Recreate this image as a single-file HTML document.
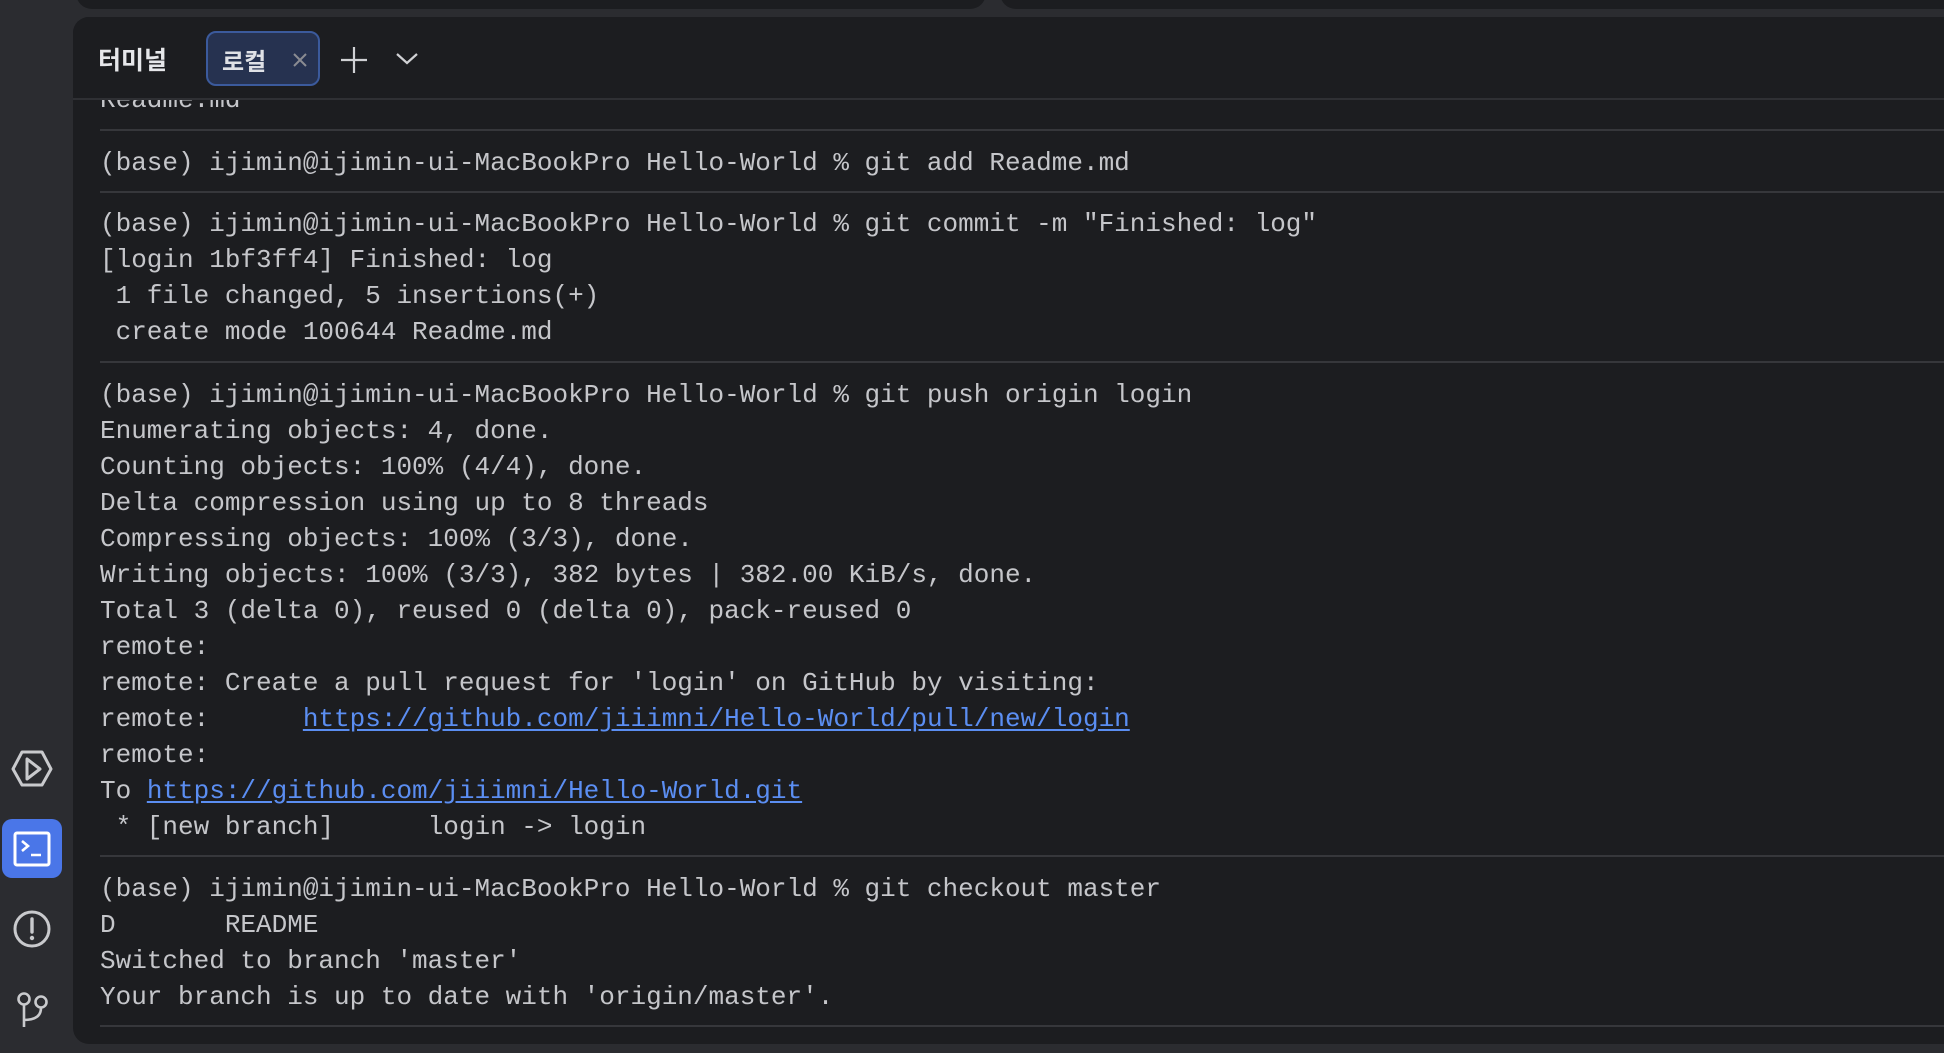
<!DOCTYPE html>
<html><head><meta charset="utf-8"><style>
*{margin:0;padding:0;box-sizing:border-box}
body{width:1944px;height:1053px;background:#2b2c30;position:relative;overflow:hidden;font-family:"Liberation Mono",monospace}
.top1{position:absolute;left:76px;top:-20px;width:910px;height:29px;background:#1c1d20;border-radius:0 0 16px 16px}
.top2{position:absolute;left:1000px;top:-20px;width:960px;height:29px;background:#1c1d20;border-radius:0 0 0 16px}
.panel{position:absolute;left:73px;top:17px;width:1900px;height:1027px;background:#1c1d20;border-radius:16px 0 0 16px;overflow:hidden}
.hdr{position:absolute;left:0;top:0;width:100%;height:83px;background:#1c1d20;border-bottom:2px solid #2f3034;z-index:2}
.ttl{position:absolute;left:25px;top:24px;font:bold 25px "Liberation Sans","Noto Sans CJK KR",sans-serif;color:#e6e7ea}
.tab{position:absolute;left:133px;top:14px;width:114px;height:55px;background:#263250;border:2px solid #3b5a9c;border-radius:10px}
.tab span{position:absolute;left:14px;top:9px;font:bold 24px "Liberation Sans","Noto Sans CJK KR",sans-serif;color:#dfe1e6}
.ln{position:absolute;left:27px;font-size:26px;line-height:36px;height:36px;color:#c5c6ca;white-space:pre}
.hr{position:absolute;left:27px;width:1900px;height:2px;background:#36373b}
a{color:#5b8ef2;text-decoration:underline;text-underline-offset:3px}
</style></head><body>
<div class="top1"></div><div class="top2"></div>
<svg style="position:absolute;left:0;top:740px" width="70" height="313">
<path d="M22 29 L42 29 L51 46 L42 62 L22 62 L13 46 Z" fill="none" stroke="#c9cacd" stroke-width="3" stroke-linejoin="round" transform="translate(0,-17)"/>
<path d="M27 19 L27 39 L40 29 Z" fill="none" stroke="#c9cacd" stroke-width="3" stroke-linejoin="round"/>
<rect x="2" y="79" width="60" height="59" rx="10" fill="#4a76e8"/>
<rect x="15" y="93" width="34" height="32" rx="2" fill="none" stroke="#fff" stroke-width="3"/>
<path d="M22 101 L28 106 L22 111 M31 115 L41 115" fill="none" stroke="#fff" stroke-width="2.6"/>
<circle cx="32" cy="189" r="17" fill="none" stroke="#c9cacd" stroke-width="3"/>
<path d="M32 179 L32 192" stroke="#c9cacd" stroke-width="3.4" stroke-linecap="round"/><circle cx="32" cy="198" r="2.2" fill="#c9cacd"/>
<circle cx="24" cy="259" r="5.5" fill="none" stroke="#c9cacd" stroke-width="2.6"/>
<circle cx="41" cy="262" r="5.5" fill="none" stroke="#c9cacd" stroke-width="2.6"/>
<path d="M24 265 L24 287 M24 280 Q41 280 41 268" fill="none" stroke="#c9cacd" stroke-width="2.6"/>
</svg>
<div class="panel">
<div class="hdr">
<div class="ttl">터미널</div>
<div class="tab"><span>로컬</span>
<svg style="position:absolute;left:84px;top:19px" width="16" height="16"><path d="M2 2 L14 14 M14 2 L2 14" stroke="#8a8c92" stroke-width="2"/></svg></div>
<svg style="position:absolute;left:266px;top:28px" width="30" height="30"><path d="M15 2 L15 28 M2 15 L28 15" stroke="#d0d1d4" stroke-width="2.2"/></svg>
<svg style="position:absolute;left:322px;top:34px" width="24" height="16"><path d="M2 3 L12 12 L22 3" fill="none" stroke="#d0d1d4" stroke-width="2.2"/></svg>
</div>
<div class="ln" style="top:65px">Readme.md</div>
<div class="hr" style="top:112px"></div>
<div class="ln" style="top:128px">(base) ijimin@ijimin-ui-MacBookPro Hello-World % git add Readme.md</div>
<div class="hr" style="top:174px"></div>
<div class="ln" style="top:189px">(base) ijimin@ijimin-ui-MacBookPro Hello-World % git commit -m "Finished: log"</div>
<div class="ln" style="top:225px">[login 1bf3ff4] Finished: log</div>
<div class="ln" style="top:261px"> 1 file changed, 5 insertions(+)</div>
<div class="ln" style="top:297px"> create mode 100644 Readme.md</div>
<div class="hr" style="top:344px"></div>
<div class="ln" style="top:360px">(base) ijimin@ijimin-ui-MacBookPro Hello-World % git push origin login</div>
<div class="ln" style="top:396px">Enumerating objects: 4, done.</div>
<div class="ln" style="top:432px">Counting objects: 100% (4/4), done.</div>
<div class="ln" style="top:468px">Delta compression using up to 8 threads</div>
<div class="ln" style="top:504px">Compressing objects: 100% (3/3), done.</div>
<div class="ln" style="top:540px">Writing objects: 100% (3/3), 382 bytes | 382.00 KiB/s, done.</div>
<div class="ln" style="top:576px">Total 3 (delta 0), reused 0 (delta 0), pack-reused 0</div>
<div class="ln" style="top:612px">remote:</div>
<div class="ln" style="top:648px">remote: Create a pull request for 'login' on GitHub by visiting:</div>
<div class="ln" style="top:684px">remote:      <a>https://github.com/jiiimni/Hello-World/pull/new/login</a></div>
<div class="ln" style="top:720px">remote:</div>
<div class="ln" style="top:756px">To <a>https://github.com/jiiimni/Hello-World.git</a></div>
<div class="ln" style="top:792px"> * [new branch]      login -&gt; login</div>
<div class="hr" style="top:838px"></div>
<div class="ln" style="top:854px">(base) ijimin@ijimin-ui-MacBookPro Hello-World % git checkout master</div>
<div class="ln" style="top:890px">D       README</div>
<div class="ln" style="top:926px">Switched to branch 'master'</div>
<div class="ln" style="top:962px">Your branch is up to date with 'origin/master'.</div>
<div class="hr" style="top:1008px"></div>
</div>
</body></html>
